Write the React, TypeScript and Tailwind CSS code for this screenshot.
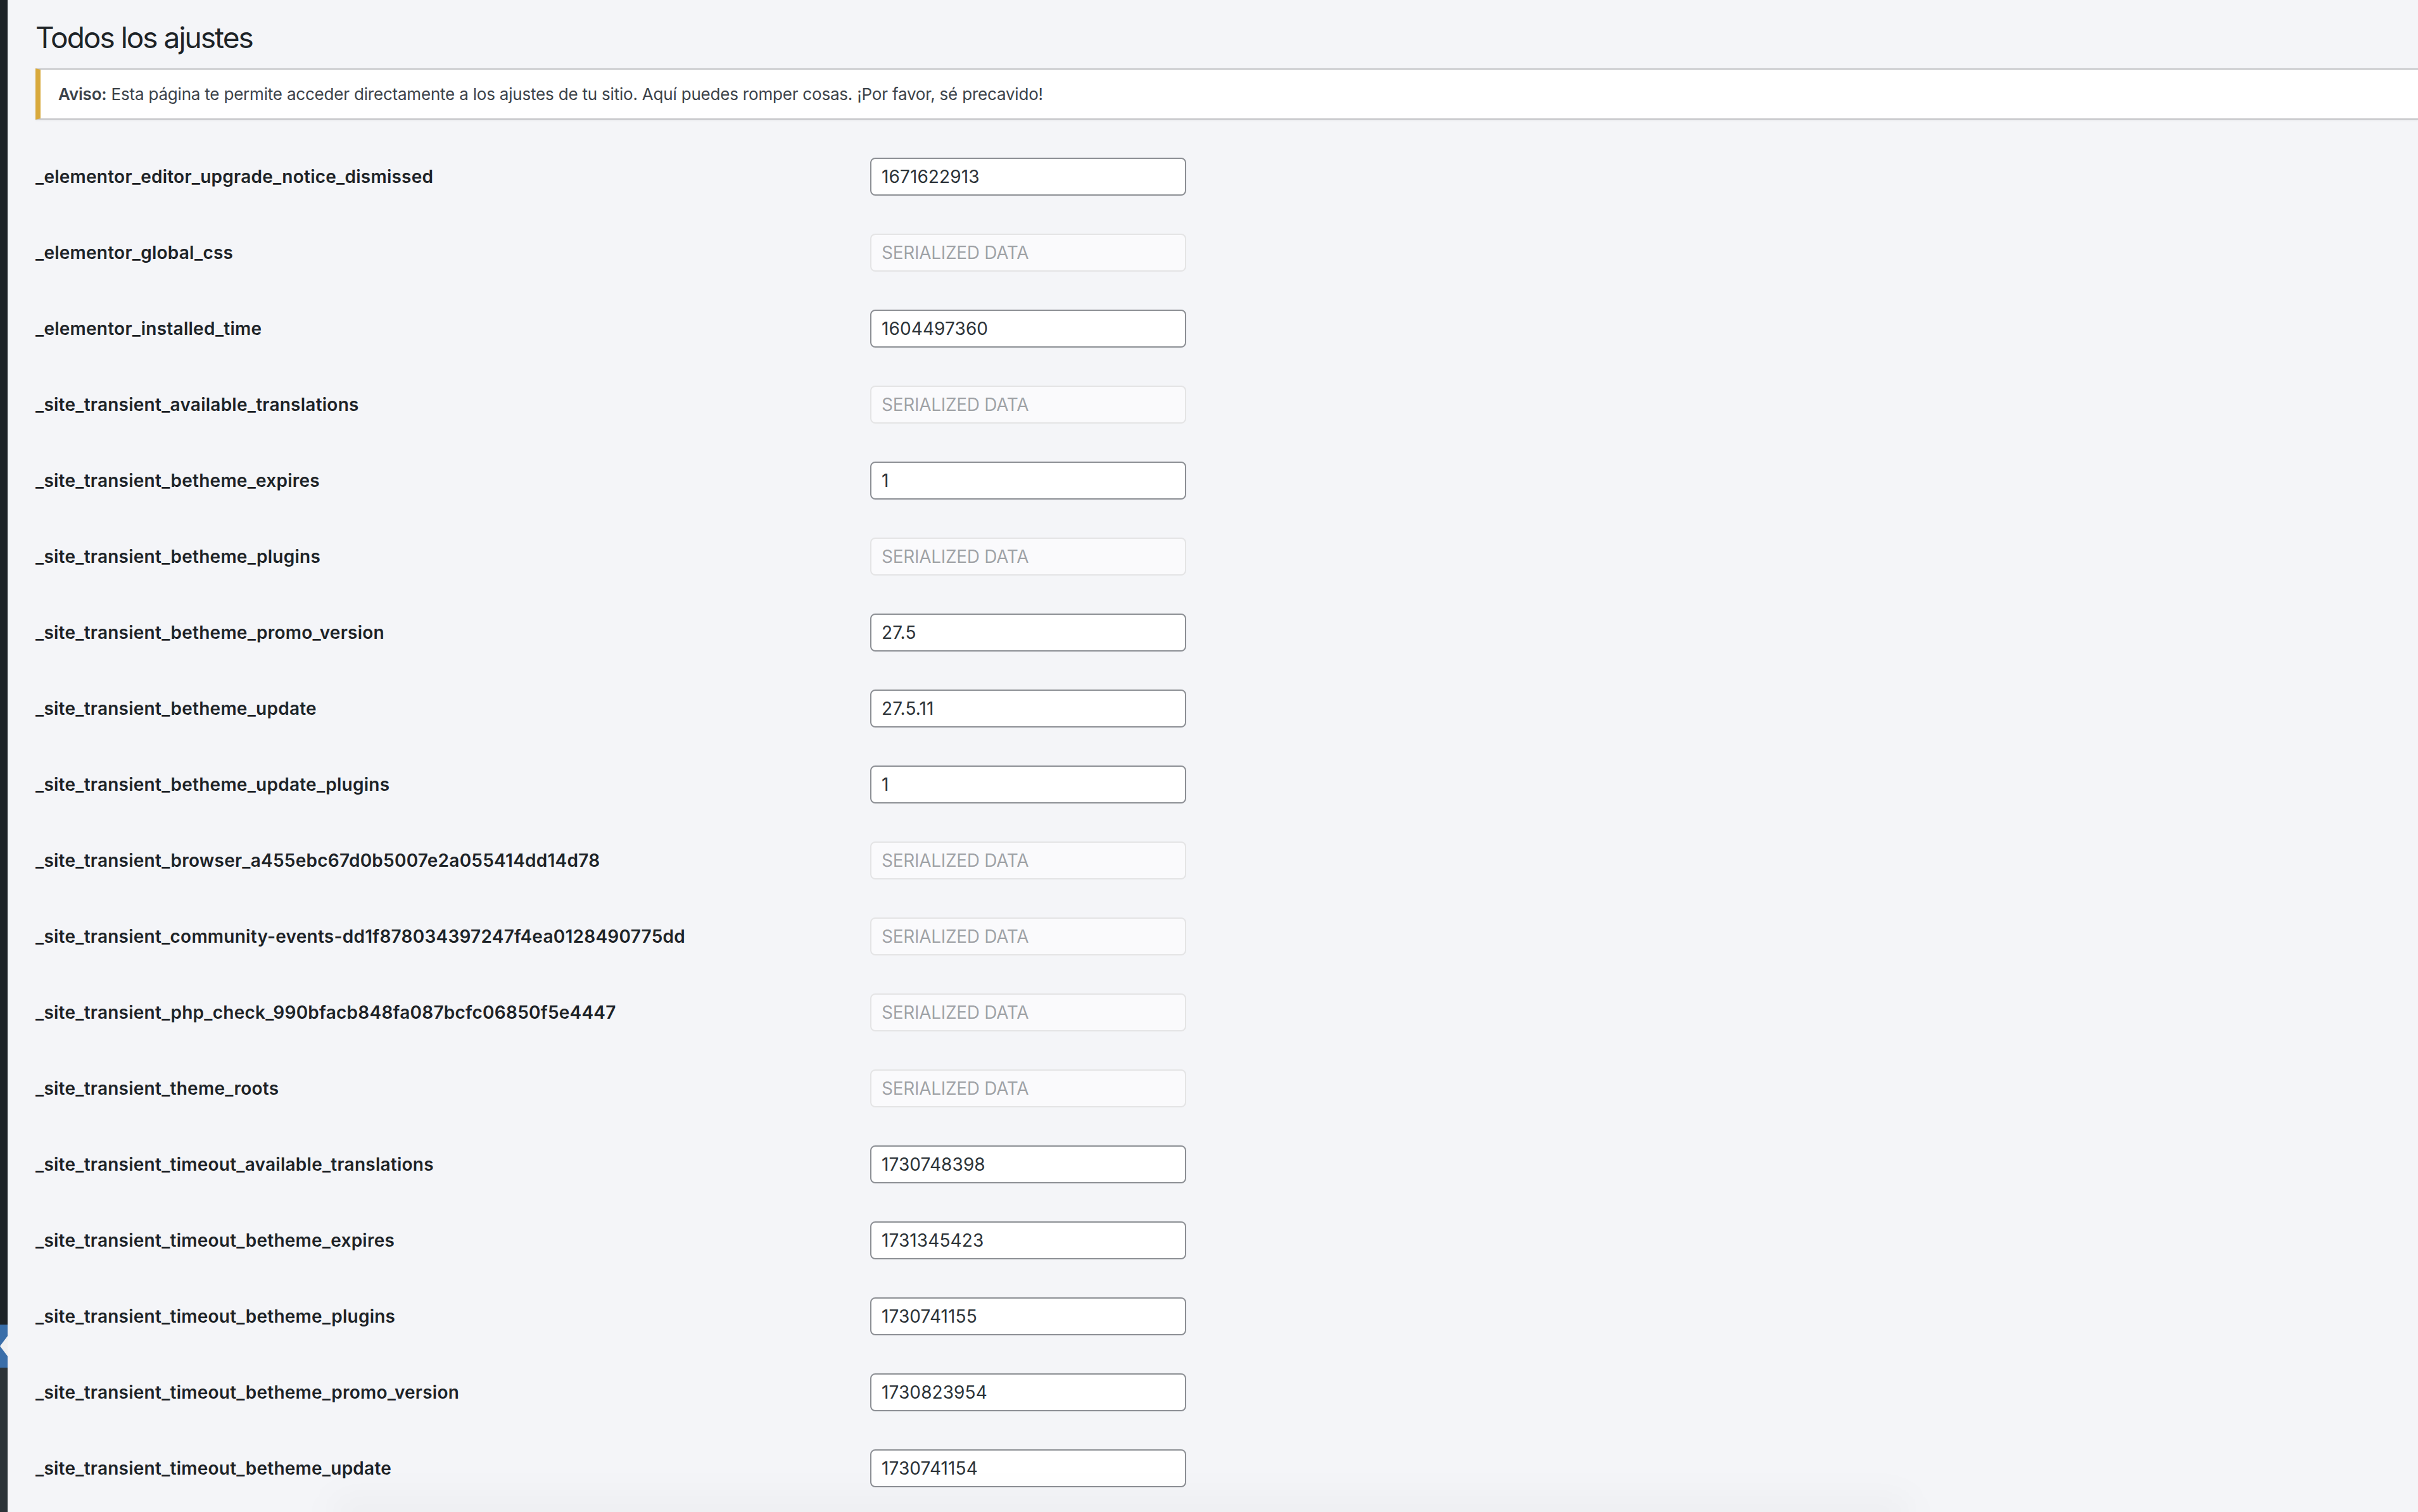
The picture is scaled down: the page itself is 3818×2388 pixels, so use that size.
import React from "react";

type Row = { name: string; value: string | null };

const rows: Row[] = [
  { name: "_elementor_editor_upgrade_notice_dismissed", value: "1671622913" },
  { name: "_elementor_global_css", value: null },
  { name: "_elementor_installed_time", value: "1604497360" },
  { name: "_site_transient_available_translations", value: null },
  { name: "_site_transient_betheme_expires", value: "1" },
  { name: "_site_transient_betheme_plugins", value: null },
  { name: "_site_transient_betheme_promo_version", value: "27.5" },
  { name: "_site_transient_betheme_update", value: "27.5.11" },
  { name: "_site_transient_betheme_update_plugins", value: "1" },
  { name: "_site_transient_browser_a455ebc67d0b5007e2a055414dd14d78", value: null },
  { name: "_site_transient_community-events-dd1f878034397247f4ea0128490775dd", value: null },
  { name: "_site_transient_php_check_990bfacb848fa087bcfc06850f5e4447", value: null },
  { name: "_site_transient_theme_roots", value: null },
  { name: "_site_transient_timeout_available_translations", value: "1730748398" },
  { name: "_site_transient_timeout_betheme_expires", value: "1731345423" },
  { name: "_site_transient_timeout_betheme_plugins", value: "1730741155" },
  { name: "_site_transient_timeout_betheme_promo_version", value: "1730823954" },
  { name: "_site_transient_timeout_betheme_update", value: "1730741154" },
];

export default function App() {
  return (
    <div className="relative flex min-h-screen overflow-hidden bg-[#f4f5f8] font-[family-name:Inter,sans-serif] text-[#1d2327]">
      {/* admin sidebar edge */}
      <div className="flex w-[12px] shrink-0 flex-col">
        <div className="flex-1 bg-[#1d2327]" />
        <div className="h-[68px] bg-[#3a6ea9]">
          <svg width="12" height="68" viewBox="0 0 12 68">
            <polygon points="12,18 0,34 12,50" fill="#f0f0f1" />
          </svg>
        </div>
        <div className="h-[228px] bg-[#2c3338]" />
      </div>

      {/* content */}
      <div className="min-w-0 flex-1 pl-[44px] pt-[29px]">
        <h1 className="text-[46px] font-normal leading-[60px] tracking-[-2px] text-[#1d2327]">
          Todos los ajustes
        </h1>

        <div className="mt-[19px] border-y-2 border-l-[8px] border-y-[#c3c4c7] border-l-[#d8a93c] bg-white py-[19px] pl-[28px] shadow-[0_2px_2px_rgba(0,0,0,0.04)]">
          <p className="text-[26px] leading-[39px] tracking-[-0.2px] text-[#3c434a]">
            <strong className="font-semibold">Aviso:</strong> Esta página te permite acceder directamente a los
            ajustes de tu sitio. Aquí puedes romper cosas. ¡Por favor, sé precavido!
          </p>
        </div>

        <div className="mt-[30px] grid grid-cols-[1318px_499px]">
          {rows.map((r) => (
            <React.Fragment key={r.name}>
              <div className="flex h-[120px] items-center text-[28px] font-semibold tracking-[0.25px] text-[#1d2327]">
                {r.name}
              </div>
              <div className="flex h-[120px] items-center">
                {r.value !== null ? (
                  <div className="flex h-[60px] w-[499px] items-center rounded-[8px] border-2 border-[#8c8f94] bg-white px-[16px] text-[28px] tracking-[0.1px] text-[#2c3338]">
                    {r.value}
                  </div>
                ) : (
                  <div className="flex h-[60px] w-[499px] items-center rounded-[8px] border-2 border-[#dcdcde]/75 bg-white/50 px-[16px] text-[28px] tracking-[-0.3px] text-[#2c3338]/45">
                    SERIALIZED DATA
                  </div>
                )}
              </div>
            </React.Fragment>
          ))}
        </div>
      </div>

      {/* faint shadow at bottom of the capture */}
      <div className="pointer-events-none absolute bottom-[-30px] left-[520px] h-[60px] w-[2500px] rounded-[40px] bg-black/[0.025] blur-xl" />
    </div>
  );
}
